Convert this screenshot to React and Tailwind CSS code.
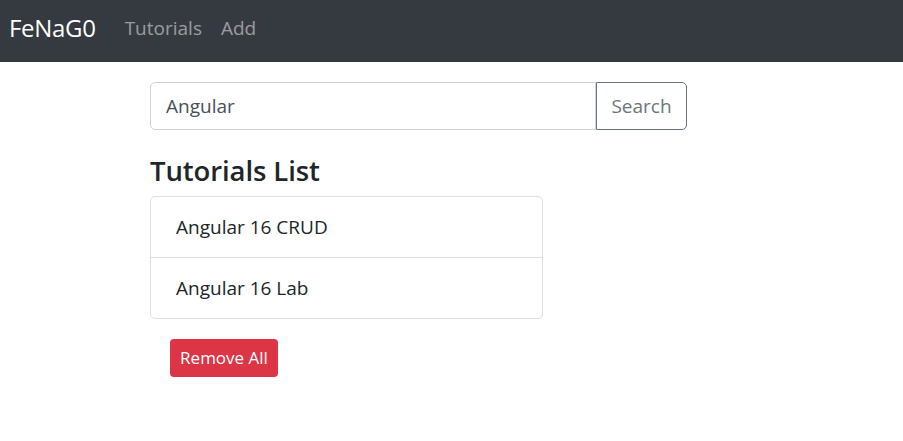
import React, { useState } from "react";

const tutorials = ["Angular 16 CRUD", "Angular 16 Lab"];

export default function App() {
  const [query, setQuery] = useState("Angular");

  return (
    <div className="min-h-[441px] bg-white font-['Open_Sans',sans-serif] text-[#212529]">
      {/* Navbar */}
      <nav className="flex h-[62px] items-center bg-[#343a40] px-[9px] pb-[6px]">
        <a href="#" className="mr-[29px] text-[24px] leading-none text-white tracking-[-0.3px]">
          FeNaG0
        </a>
        <div className="flex gap-[19px] text-[19px] leading-none text-white/50">
          <a href="#">Tutorials</a>
          <a href="#">Add</a>
        </div>
      </nav>

      <div className="pl-[150px] pt-[20px]">
        {/* Search */}
        <div className="flex h-[48px] w-[537px]">
          <input
            value={query}
            onChange={(e) => setQuery(e.target.value)}
            className="h-full flex-1 rounded-l-[5px] border border-[#ced4da] px-[15px] text-[19px] text-[#495057] outline-none"
          />
          <button className="h-full w-[91px] rounded-r-[5px] border border-[#6c757d] text-[19px] text-[#6c757d]">
            Search
          </button>
        </div>

        <h4 className="mt-[23px] text-[27.5px] font-semibold leading-[35px] tracking-[-0.1px]">
          Tutorials List
        </h4>

        <ul className="mt-[8px] w-[393px] rounded-[5px] border border-[#dfdfdf]">
          {tutorials.map((t, i) => (
            <li
              key={t}
              className={`flex items-center px-[25px] text-[19px] ${
                i > 0 ? "h-[61px] border-t border-[#dfdfdf]" : "h-[60px]"
              }`}
            >
              {t}
            </li>
          ))}
        </ul>

        <button className="ml-[20px] mt-[20px] h-[38px] w-[108px] rounded-[4px] bg-[#dc3545] text-[17px] text-white">
          Remove All
        </button>
      </div>
    </div>
  );
}
